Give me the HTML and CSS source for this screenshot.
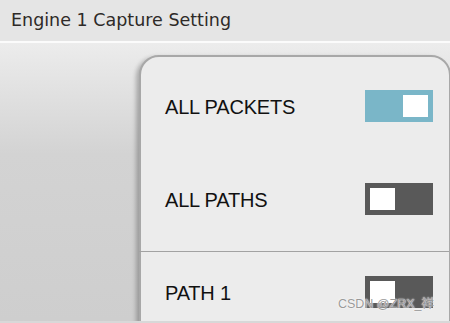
FILE: index.html
```html
<!DOCTYPE html>
<html>
<head>
<meta charset="utf-8">
<link rel="stylesheet" href="styles.css">
</head>
<body>
<header class="topbar">Engine 1 Capture Setting</header>
<main class="stage">
  <section class="panel">
    <div class="row">
      <span class="label">ALL PACKETS</span>
      <span class="toggle on"><span class="knob"></span></span>
    </div>
    <div class="row">
      <span class="label">ALL PATHS</span>
      <span class="toggle"><span class="knob"></span></span>
    </div>
    <div class="divider"></div>
    <div class="row row-path">
      <span class="label">PATH 1</span>
      <span class="toggle"><span class="knob"></span></span>
    </div>
  </section>
  <span class="watermark">CSDN @ZRX_祥</span>
</main>
</body>
</html>
```
FILE: styles.css
```css
html, body {
  margin: 0;
  padding: 0;
  width: 450px;
  height: 323px;
  overflow: hidden;
}
body {
  background: #d8d8d8;
  font-family: "Liberation Sans", Arial, sans-serif;
}
.topbar {
  height: 43px;
  box-sizing: border-box;
  padding: 10px 0 0 11px;
  background: #e5e5e5;
  border-bottom: 2px solid #fbfbfb;
  font-family: "DejaVu Sans", Verdana, sans-serif;
  font-size: 17.5px;
  color: #2e2a28;
}
.stage {
  position: relative;
  height: 278px;
  padding: 12px 0 0 139px;
  box-sizing: border-box;
  overflow: hidden;
  background: linear-gradient(180deg, #ececec 0%, #d3d3d3 40%, #cecece 100%);
}
.panel {
  width: 312px;
  height: 300px;
  box-sizing: border-box;
  background: #ececec;
  border: 2px solid #a8a8a8;
  border-radius: 20px 20px 0 0;
  box-shadow: -3px 2px 4px rgba(0,0,0,0.25);
  padding-top: 2px;
}
.row {
  height: 93px;
  display: flex;
  align-items: center;
  justify-content: space-between;
  padding: 0 16px 0 24px;
}
.row-path {
  height: 80px;
}
.divider {
  margin-top: 6px;
  height: 1px;
  background: #a2a2a2;
  margin-left: -2px;
}
.label {
  font-size: 20px;
  letter-spacing: -0.2px;
  color: #111;
  padding-top: 3px;
}
.toggle {
  width: 68px;
  height: 32px;
  box-sizing: border-box;
  padding: 5px;
  background: #595959;
  display: flex;
  justify-content: flex-start;
}
.toggle.on {
  background: #7ab6c8;
  justify-content: flex-end;
}
.knob {
  width: 25px;
  height: 22px;
  background: #ffffff;
}
.watermark {
  position: absolute;
  right: 16px;
  bottom: 9px;
  font-size: 12.5px;
  color: #9a9a9a;
  font-family: "Liberation Sans", "Noto Sans CJK SC", sans-serif;
  text-shadow: 0 0 2px #fff, 0 0 1px #fff;
}
```
